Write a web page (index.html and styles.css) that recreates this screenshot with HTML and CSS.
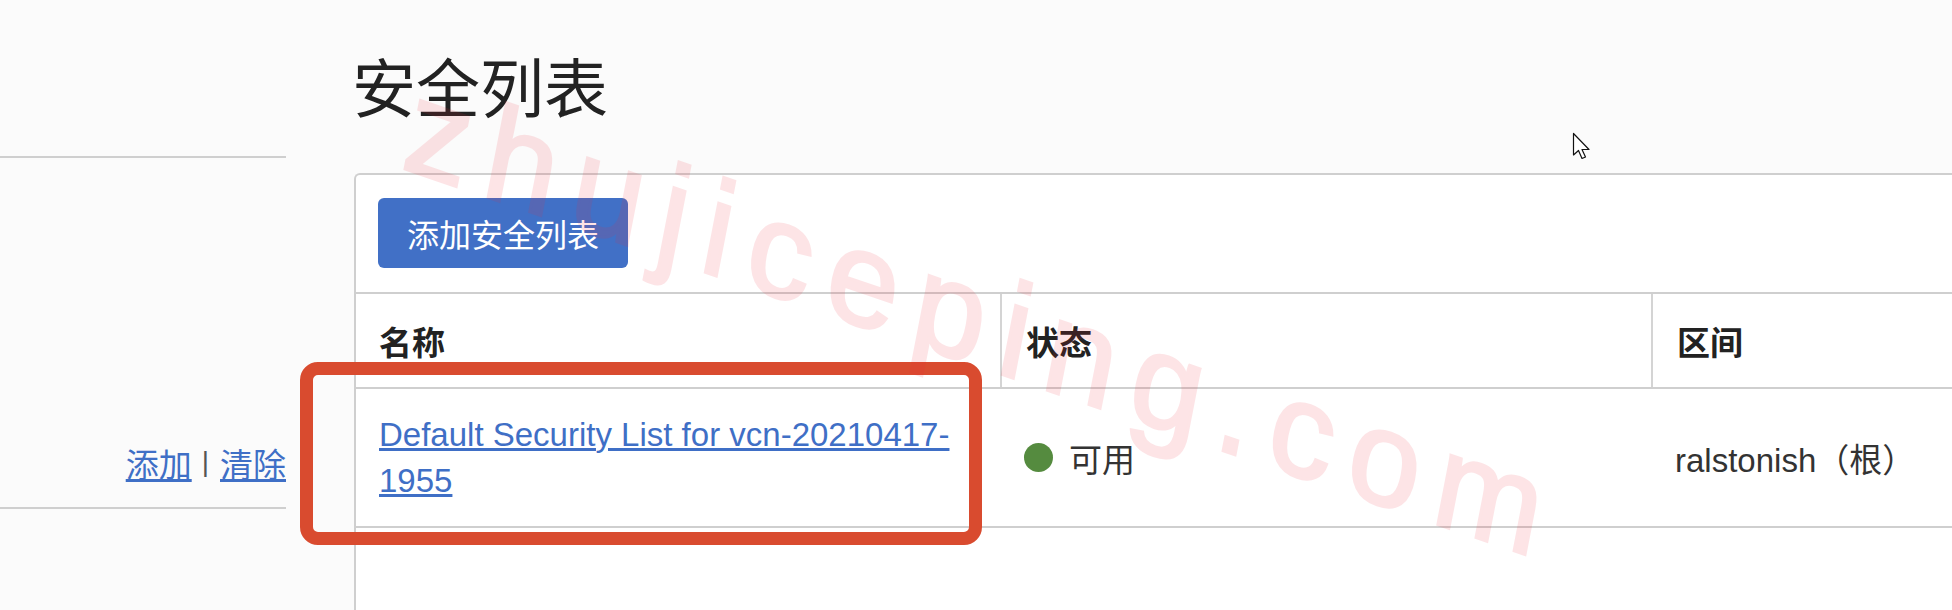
FILE: index.html
```html
<!DOCTYPE html>
<html lang="zh-CN">
<head>
    <meta charset="UTF-8">
    <meta name="viewport" content="width=device-width, initial-scale=1.0">
    <title>安全列表</title>
    <link rel="stylesheet" href="styles.css">
</head>
<body>

<div class="page">
    <!-- Left filter panel -->
    <aside class="sidebar">
        <div class="filter">
            <a href="#" class="filter-link">添加</a>
            <span class="filter-sep">|</span>
            <a href="#" class="filter-link">清除</a>
        </div>
    </aside>

    <main class="main">
        <h1 class="page-title">安全列表</h1>

        <div class="card">
            <div class="toolbar">
                <button class="btn-primary">添加安全列表</button>
            </div>

            <div class="table">
                <div class="table-head">
                    <div class="th">名称</div>
                    <div class="th">状态</div>
                    <div class="th">区间</div>
                </div>
                <div class="table-row">
                    <div class="td">
                        <a href="#" class="row-link">Default Security List for vcn-20210417-1955</a>
                    </div>
                    <div class="td">
                        <span class="status-dot"></span>可用
                    </div>
                    <div class="td">ralstonish（根）</div>
                </div>
            </div>
        </div>
    </main>
</div>

<!-- Overlays from the screenshot -->
<div class="highlight-box"></div>
<div class="watermark">zhujiceping.com</div>
<svg class="cursor" width="20" height="30" viewBox="0 0 20 30">
    <path d="M1.5 1.5 L1.5 23 L6.5 18.5 L10 26.5 L13.5 25 L10 17.5 L17 17.5 Z" fill="#fff" stroke="#111" stroke-width="1.2" stroke-linejoin="round"/>
</svg>

</body>
</html>
```

FILE: styles.css
```css
body {
    font-family: "Liberation Sans", "Noto Sans CJK SC", sans-serif;
    margin: 0;
    padding: 0;
    background-color: #fbfbfb;
    color: #333;
    overflow: hidden;
    height: 610px;
}

.page {
    display: flex;
    height: 100%;
}

/* Left filter panel */
.sidebar {
    width: 286px;
    flex-shrink: 0;
    padding-top: 156px;
}

.filter {
    box-sizing: border-box;
    height: 353px;
    border-top: 2px solid #cfcfcf;
    border-bottom: 2px solid #cfcfcf;
    display: flex;
    align-items: flex-end;
    justify-content: flex-end;
    padding-bottom: 21px;
    font-size: 33px;
    line-height: 40px;
}

.filter-link {
    color: #3f6fc6;
}

.filter-sep {
    color: #555;
    font-size: 28px;
    margin: 0 11px 0 10px;
    position: relative;
    top: -4px;
}

/* Main area */
.main {
    flex: 1;
    margin-left: 68px;
    display: flex;
    flex-direction: column;
}

.page-title {
    margin: 58px 0 0 -2px;
    font-size: 64px;
    line-height: 64px;
    font-weight: normal;
    color: #222;
}

.card {
    flex: 1;
    margin-top: 51px;
    background-color: #fff;
    border: 2px solid #cfcfcf;
    border-right: none;
    border-bottom: none;
    border-top-left-radius: 6px;
}

.toolbar {
    padding: 23px 22px 24px;
}

.btn-primary {
    width: 250px;
    height: 70px;
    padding: 0;
    border: none;
    border-radius: 6px;
    background-color: #4170c6;
    color: #fff;
    font-family: inherit;
    font-size: 32px;
    cursor: pointer;
}

/* Table */
.table-head,
.table-row {
    display: grid;
    grid-template-columns: 644px 651px 1fr;
}

.table-head {
    height: 97px;
    box-sizing: border-box;
    border-top: 2px solid #cfcfcf;
    border-bottom: 2px solid #cfcfcf;
}

.th {
    display: flex;
    align-items: center;
    padding-left: 23px;
    font-size: 33px;
    font-weight: bold;
    color: #222;
}

.th + .th {
    border-left: 2px solid #d4d4d4;
    padding-left: 24px;
}

.table-row {
    height: 139px;
    box-sizing: border-box;
    border-bottom: 2px solid #cfcfcf;
}

.td {
    display: flex;
    align-items: center;
    padding-left: 23px;
    font-size: 33px;
    color: #333;
}

.td:nth-child(2),
.td:nth-child(3) {
    padding-left: 24px;
}

.row-link {
    color: #3f6fc6;
    line-height: 46px;
    padding-right: 20px;
}

.status-dot {
    width: 29px;
    height: 29px;
    border-radius: 50%;
    background-color: #558b3f;
    margin-right: 16px;
}

/* Red annotation box */
.highlight-box {
    position: absolute;
    left: 300px;
    top: 362px;
    width: 682px;
    height: 183px;
    box-sizing: border-box;
    border: 13px solid #d94b2f;
    border-radius: 18px;
}

/* Site watermark */
.watermark {
    position: absolute;
    left: 396px;
    top: 56px;
    font-family: "Liberation Sans", sans-serif;
    font-size: 132px;
    line-height: 1;
    letter-spacing: 18px;
    color: rgb(240, 40, 55);
    -webkit-text-stroke: 3px rgb(240, 40, 55);
    opacity: 0.12;
    transform-origin: 0 100%;
    transform: rotate(19deg) skewX(8deg);
    white-space: nowrap;
    pointer-events: none;
}

.cursor {
    position: absolute;
    left: 1572px;
    top: 132px;
}
```
